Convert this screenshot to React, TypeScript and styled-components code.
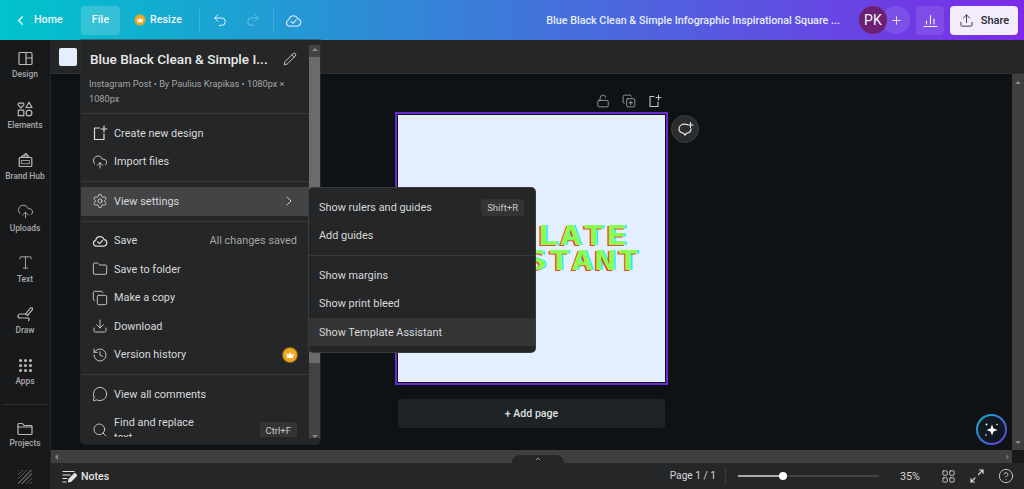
import React from 'react'
import styled, { createGlobalStyle } from 'styled-components'
import {
  ChevronLeft,
  ChevronRight,
  ChevronUp,
  CircleHelp,
  CloudUpload,
  Copy,
  CopyPlus,
  Download,
  Folder,
  Grip,
  History,
  LayoutGrid,
  LockOpen,
  MessageCircle,
  Pencil,
  Plus,
  Redo2,
  Search,
  Settings,
  Type,
  Undo2,
  Upload,
} from 'lucide-react'

const GlobalStyle = createGlobalStyle`
  html, body {
    margin: 0;
    height: 100%;
    background: #0e1215;
    overflow: hidden;
  }
  * { box-sizing: border-box; }
  #root {
    height: 100%;
    font-family: Roboto, "Noto Sans", sans-serif;
  }
`

const Shell = styled.div`
  position: relative;
  width: 1024px;
  height: 489px;
  display: flex;
  flex-direction: column;
  overflow: hidden;
`

/* top bar */
const TopBar = styled.header`
  height: 40px;
  flex: none;
  display: flex;
  align-items: center;
  padding: 0 6px 0 13px;
  color: #f4f7fc;
  background: linear-gradient(90deg, #00c4cc 0%, #7d2ae8 100%);
`
const TopLabel = styled.span`
  font-size: 10.6px;
  font-weight: 500;
  letter-spacing: 0.1px;
  line-height: 1;
`
const HomeLink = styled.div`
  display: flex;
  align-items: center;
  gap: 6px;
  width: 68px;
`
const FileButton = styled.div`
  width: 39px;
  height: 29px;
  border-radius: 4px;
  background: rgba(255, 255, 255, 0.17);
  display: flex;
  align-items: center;
  justify-content: center;
`
const ResizeButton = styled.div`
  display: flex;
  align-items: center;
  gap: 5px;
  margin-left: 15px;
`
const CrownDot = styled.span<{ $size: number }>`
  width: ${(p) => p.$size}px;
  height: ${(p) => p.$size}px;
  flex: none;
  border-radius: 50%;
  background: #f2a91d;
  box-shadow: 0 0 0 1px rgba(242, 169, 29, 0.45);
  display: flex;
  align-items: center;
  justify-content: center;
`
const TopDivider = styled.span<{ $left: number }>`
  width: 1px;
  height: 23px;
  margin-left: ${(p) => p.$left}px;
  background: rgba(255, 255, 255, 0.16);
`
const UndoGroup = styled.div`
  display: flex;
  align-items: center;
  gap: 17px;
  margin-left: 12px;
`
const SaveState = styled.span`
  display: flex;
  margin-left: 11px;
  opacity: 0.75;
`
const DocTitle = styled.div`
  margin-left: auto;
  font-size: 10.75px;
  font-weight: 500;
  white-space: nowrap;
  color: #e6edfb;
`
const People = styled.div`
  display: flex;
  align-items: center;
  margin-left: 19px;
`
const Avatar = styled.div`
  position: relative;
  z-index: 1;
  width: 28px;
  height: 28px;
  border-radius: 50%;
  background: #6b2071;
  font-size: 14px;
  letter-spacing: 0.3px;
  display: flex;
  align-items: center;
  justify-content: center;
`
const InviteButton = styled.div`
  width: 28px;
  height: 28px;
  margin-left: -5px;
  border-radius: 50%;
  background: rgba(255, 255, 255, 0.1);
  display: flex;
  align-items: center;
  justify-content: center;
`
const StatsButton = styled.div`
  width: 28px;
  height: 29px;
  margin-left: 6px;
  border-radius: 4px;
  background: rgba(255, 255, 255, 0.1);
  display: flex;
  align-items: center;
  justify-content: center;
`
const ShareButton = styled.div`
  width: 68px;
  height: 29px;
  margin-left: 6px;
  border-radius: 4px;
  background: #f2ecfc;
  color: #26282c;
  font-size: 11px;
  font-weight: 500;
  display: flex;
  align-items: center;
  justify-content: center;
  gap: 7px;
`

/* body */
const Body = styled.div`
  flex: 1;
  min-height: 0;
  display: flex;
`
const Rail = styled.nav`
  width: 51px;
  flex: none;
  background: #18191b;
  border-right: 1px solid #242527;
  display: flex;
  flex-direction: column;
  align-items: center;
`
const RailItem = styled.div`
  width: 100%;
  height: 51.2px;
  flex: none;
  display: flex;
  flex-direction: column;
  align-items: center;
  gap: 2px;
  padding-top: 9px;
  color: #b9babb;
`
const RailIcon = styled.span<{ $h?: number }>`
  height: ${(p) => p.$h ?? 18}px;
  display: flex;
  align-items: center;
  justify-content: center;
  margin-bottom: ${(p) => (p.$h ? -1 : 0)}px;
`
const RailLabel = styled.span`
  font-size: 8.4px;
  line-height: 10px;
  font-weight: 500;
  color: #a9aaab;
  white-space: nowrap;
`
const RailRule = styled.div`
  width: 45px;
  height: 1px;
  flex: none;
  margin: 5.6px 0 8px;
  background: #2b2c2e;
`
const Hatch = styled.div`
  width: 14px;
  height: 14px;
  margin-top: 6px;
  flex: none;
  background: repeating-linear-gradient(135deg, #58595b 0 1px, transparent 1px 3px);
`
const Workspace = styled.main`
  flex: 1;
  min-width: 0;
  display: flex;
  flex-direction: column;
`
const ContextBar = styled.div`
  height: 34px;
  flex: none;
  background: #252627;
  border-bottom: 1px solid #2f3032;
  display: flex;
  align-items: center;
  padding-left: 8px;
`
const Swatch = styled.div`
  width: 18px;
  height: 18px;
  border-radius: 2px;
  background: #e3eefe;
`
const CanvasRow = styled.div`
  flex: 1;
  min-height: 0;
  display: flex;
`
const Canvas = styled.div`
  position: relative;
  flex: 1;
  min-width: 0;
  background: #0e1215;
  display: flex;
  flex-direction: column;
  align-items: center;
  padding-top: 17px;
`
const PageTools = styled.div`
  width: 273px;
  height: 21px;
  display: flex;
  justify-content: flex-end;
  align-items: center;
  gap: 12px;
  padding: 0 6px 1px 0;
  color: #c4c6c7;
`
const Page = styled.div`
  width: 273px;
  height: 273px;
  flex: none;
  border: 2px solid #6a2bd0;
  outline: 1px solid #111;
  outline-offset: -3px;
  background: #e3eefe;
  display: flex;
  align-items: center;
  justify-content: center;
`
const PageText = styled.div`
  font-family: "DejaVu Sans Mono", monospace;
  font-size: 26px;
  font-weight: 700;
  line-height: 24.5px;
  text-align: center;
  white-space: nowrap;
  color: #86ff4e;
  letter-spacing: 1px;
  text-shadow: -1px 0.5px 0 #e8452f, 1px -0.5px 0 #22e6f2;
  transform: translateX(5px) scaleX(1.38);
`
const AddPage = styled.div`
  width: 267px;
  height: 29px;
  margin-top: 14px;
  border-radius: 3px;
  background: #1e2326;
  color: #dfe1e2;
  font-size: 10.6px;
  font-weight: 500;
  display: flex;
  align-items: center;
  justify-content: center;
`
const CommentBubble = styled.div`
  position: absolute;
  left: 620px;
  top: 41px;
  width: 28px;
  height: 28px;
  border-radius: 50%;
  background: #2a2c2e;
  border: 1px solid #3b3d3f;
  color: #e4e5e6;
  display: flex;
  align-items: center;
  justify-content: center;
`
const MagicButton = styled.div`
  position: absolute;
  right: 5px;
  bottom: 5px;
  width: 31px;
  height: 31px;
  border-radius: 50%;
  padding: 2px;
  background: linear-gradient(135deg, #10b8cf, #6a35d8);
  &::before {
    content: '';
    display: block;
    width: 100%;
    height: 100%;
    border-radius: 50%;
    background: #111a22;
  }
  svg {
    position: absolute;
    left: 7px;
    top: 7px;
  }
`

/* scroll bars */
const VScroll = styled.div`
  width: 12px;
  flex: none;
  background: #3f3f3f;
  display: flex;
  flex-direction: column;
  align-items: center;
  justify-content: space-between;
  padding: 7px 0 6px;
`
const Arrow = styled.span<{ $dir: 'up' | 'down' | 'left' | 'right' }>`
  width: 0;
  height: 0;
  flex: none;
  border-style: solid;
  border-color: transparent;
  border-width: 3px;
  ${(p) => (p.$dir === 'up' ? 'border-top-width: 0; border-bottom-color: #8a8a8a;' : '')}
  ${(p) => (p.$dir === 'down' ? 'border-bottom-width: 0; border-top-color: #8a8a8a;' : '')}
  ${(p) => (p.$dir === 'left' ? 'border-left-width: 0; border-right-color: #8a8a8a;' : '')}
  ${(p) => (p.$dir === 'right' ? 'border-right-width: 0; border-left-color: #6a6a6a;' : '')}
`
const HScrollRow = styled.div`
  height: 13px;
  flex: none;
  display: flex;
`
const HScroll = styled.div`
  position: relative;
  flex: 1;
  background: #3f3f3f;
  display: flex;
  align-items: center;
  justify-content: space-between;
  padding: 0 3px 0 4px;
`
const Corner = styled.div`
  width: 12px;
  background: #18191b;
`
const PanelNotch = styled.div`
  position: absolute;
  left: 461px;
  bottom: 0;
  width: 52px;
  height: 8px;
  border-radius: 9px 9px 0 0;
  background: #252627;
  color: #c9cacb;
  display: flex;
  align-items: center;
  justify-content: center;
`

/* footer */
const Footer = styled.footer`
  height: 26px;
  flex: none;
  background: #252627;
  color: #d5d6d7;
  display: flex;
  align-items: center;
  padding: 0 10px 0 11px;
`
const NotesButton = styled.div`
  display: flex;
  align-items: center;
  gap: 4px;
  font-size: 10.6px;
  font-weight: 500;
  color: #e2e3e3;
`
const PageCount = styled.div`
  margin-left: auto;
  font-size: 10.2px;
  padding-right: 9px;
  border-right: 1px solid #3a3b3c;
  line-height: 16px;
`
const Slider = styled.div`
  position: relative;
  width: 141px;
  height: 2px;
  margin-left: 12px;
  background: #414243;
`
const SliderFill = styled.div`
  height: 100%;
  background: #a9aaab;
`
const SliderThumb = styled.span`
  position: absolute;
  top: -3px;
  width: 8px;
  height: 8px;
  margin-left: -4px;
  border-radius: 50%;
  background: #fff;
`
const ZoomValue = styled.div`
  width: 22px;
  margin-left: 19px;
  font-size: 10.8px;
  text-align: right;
`
const FooterIcons = styled.div`
  display: flex;
  align-items: center;
  gap: 13px;
  margin-left: 21px;
`

/* file menu */
const Menu = styled.div`
  position: absolute;
  left: 81px;
  top: 40px;
  width: 239px;
  height: 404px;
  display: flex;
  background: #252627;
  border-radius: 0 0 4px 4px;
  box-shadow: 0 0 0 1px #34353680;
  color: #d8d9da;
  z-index: 2;
`
const MenuBody = styled.div`
  flex: 1;
  min-width: 0;
  margin-bottom: 7px;
  overflow: hidden;
`
const MenuTitle = styled.div`
  height: 36px;
  margin-top: 1px;
  padding: 0 12px 0 9px;
  display: flex;
  align-items: center;
  justify-content: space-between;
  color: #e8e9e9;
  font-size: 13.6px;
  font-weight: 500;
  white-space: nowrap;
`
const MenuMeta = styled.div`
  padding: 0 8px;
  margin-top: -1px;
  font-size: 9.2px;
  line-height: 15px;
  color: #a4a5a6;
`
const MenuRule = styled.div<{ $top?: number }>`
  height: 1px;
  margin: ${(p) => p.$top ?? 5}px 0 5px;
  background: #38393a;
`
const Row = styled.div<{ $active?: boolean }>`
  display: flex;
  align-items: center;
  min-height: 28.5px;
  padding: 6.75px 12px 6.75px 11px;
  background: ${(p) => (p.$active ? '#434445' : 'transparent')};
  font-size: 10.9px;
  line-height: 15px;
  color: #d8d9da;
`
const RowIcon = styled.span`
  width: 22px;
  height: 15px;
  flex: none;
  display: flex;
  align-items: center;
`
const RowEnd = styled.span`
  height: 15px;
  flex: none;
  display: flex;
  align-items: center;
`
const RowLabel = styled.span`
  flex: 1;
  min-width: 0;
`
const WrapLabel = styled.span`
  width: 100px;
  flex: none;
`
const RowNote = styled.span`
  margin-left: auto;
  color: #a4a5a6;
  white-space: nowrap;
`
const Kbd = styled.span`
  margin: -1px 0 -1px auto;
  padding: 0 6px;
  height: 17px;
  border-radius: 3px;
  background: #333435;
  color: #c8c9ca;
  font-size: 9.5px;
  display: flex;
  align-items: center;
`
const MenuScroll = styled.div`
  width: 11px;
  flex: none;
  margin: 5px 0 6px;
  background: #434343;
  display: flex;
  flex-direction: column;
  align-items: center;
  padding-top: 3px;
`
const MenuThumb = styled.div`
  width: 100%;
  height: 306px;
  margin-top: 6px;
  background: #6b6b6b;
`
const ThumbSpacer = styled.div`
  flex: 1;
`
const SubMenu = styled.div`
  position: absolute;
  left: 309px;
  top: 188px;
  width: 226px;
  height: 164px;
  padding: 4.75px 0;
  background: #252627;
  border-radius: 4px;
  box-shadow: 0 0 0 1px #3a3b3c;
  z-index: 3;
`
const SubRow = styled(Row)`
  padding-left: 10px;
  padding-right: 11px;
`
const SubHover = styled(SubRow)`
  background: #333435;
`

const Crown = ({ size }: { size: number }) => (
  <svg width={size} height={size} viewBox="0 0 12 12" fill="#fff">
    <path d="M1.5 3.5 4 6l2-3.5L8 6l2.5-2.5L9.5 9.5h-7z" />
  </svg>
)

const line = {
  fill: 'none',
  stroke: 'currentColor',
  strokeWidth: 1.2,
  strokeLinecap: 'round' as const,
  strokeLinejoin: 'round' as const,
}

const DesignIcon = () => (
  <svg width="15" height="15" viewBox="0 0 15 15" {...line}>
    <rect x="1" y="1.5" width="13" height="12" rx="1" />
    <path d="M8 1.5v12M8 7h6" />
  </svg>
)
const ElementsIcon = () => (
  <svg width="16" height="16" viewBox="0 0 16 16" {...line}>
    <path d="M4 7 1.4 4.200a1.500 1.500 0 0 1 2.200-2L4 2.600l.4-.4a1.500 1.500 0 0 1 2.200 2z" />
    <path d="M12 1.200 15 6.500H9z" />
    <rect x="1.300" y="9.200" width="5.500" height="5.500" />
    <circle cx="12" cy="12" r="2.900" />
  </svg>
)
const BrandIcon = () => (
  <svg width="15" height="16" viewBox="0 0 15 16" {...line}>
    <rect x="1.200" y="5.500" width="12.600" height="9" rx="1" />
    <path d="m3 5.300 5-3.800 3 3.600M5 3.800l5 .2" />
    <rect x="3.600" y="8.500" width="7.800" height="3.200" strokeWidth="0.8" />
  </svg>
)
const DrawIcon = () => (
  <svg width="16" height="16" viewBox="0 0 16 16" {...line}>
    <path d="m8.600 8 4.800-6a1.300 1.300 0 0 1 2 1.600L10.600 9.400z" />
    <path d="M8.600 8H3a2 2 0 0 0 0 4h7a1.500 1.500 0 0 1 1.600 2.500" />
  </svg>
)
const FolderWide = () => (
  <svg width="16" height="14" viewBox="0 0 16 14" {...line}>
    <path d="M1 2.600C1 2 1.400 1.500 2 1.500h3.400l1.600 2h7c.6 0 1 .5 1 1v7c0 .6-.4 1-1 1H2c-.6 0-1-.4-1-1z" />
    <path d="M1 5h14" />
  </svg>
)
const CreateIcon = () => (
  <svg width="16" height="16" viewBox="0 0 16 16" {...line}>
    <path d="M7.500 3H2.500v11.500H12V9" />
    <path d="M12 1v6M9 4h6" />
  </svg>
)
const CloudCheck = ({ size }: { size: number }) => (
  <svg width={size} height={size} viewBox="0 0 16 16" {...line}>
    <path d="M4.200 13.200a3 3 0 0 1-.5-5.900 4.300 4.300 0 0 1 8.200-1 3.500 3.500 0 0 1 0 6.900z" />
    <path d="m5.800 9 1.700 1.700 3-3.200" />
  </svg>
)
const StatsIcon = () => (
  <svg width="15" height="15" viewBox="0 0 15 15" {...line} strokeWidth={1.1}>
    <path d="M1 13.500h13M3.500 11V8M7.500 11V2.500M11 11V6" />
  </svg>
)
const NotesIcon = () => (
  <svg width="15" height="14" viewBox="0 0 15 14" {...line}>
    <path d="M1 2.500h11M1 6h7M1 9.500h4M1 13h3" />
    <path d="m6.500 12.800.6-2.600 5.600-5.800 2 2-5.600 5.800z" fill="currentColor" />
  </svg>
)
const ExpandIcon = () => (
  <svg width="16" height="16" viewBox="0 0 16 16" {...line}>
    <path d="M9.500 6.500 14 2M10.500 2H14v3.500M6 10l-4 4M2 10.500V14h3.500" />
  </svg>
)
const AddPageIcon = () => (
  <svg width="14" height="14" viewBox="0 0 14 14" {...line} strokeWidth={1.1}>
    <path d="M6 2.500H2v10h8V8" />
    <path d="M10.500 1v5M8 3.500h5" />
  </svg>
)
const CommentPlus = () => (
  <svg width="17" height="17" viewBox="0 0 17 17" {...line}>
    <path d="M10.500 3.600C9.700 3.300 8.800 3.200 8 3.200c-3.400 0-6 1.900-6 4.600 0 2.300 2 4.100 4.700 4.500l1.300 1.900 1.300-1.900c2.700-.4 4.700-2.200 4.700-4.500" />
    <path d="M13.500 1.500v5M11 4h5" />
  </svg>
)
const Sparkle = () => (
  <svg width="17" height="17" viewBox="0 0 17 17" fill="#fff">
    <path d="M9 3.500 10.500 7.500 14.500 9 10.500 10.500 9 14.500 7.500 10.500 3.500 9 7.500 7.500z" />
    <circle cx="3.500" cy="3.500" r="0.9" />
    <circle cx="14" cy="3.500" r="0.8" />
    <circle cx="3" cy="14" r="0.8" />
  </svg>
)

const railItems: { label: string; icon: React.ReactNode }[] = [
  { label: 'Design', icon: <DesignIcon /> },
  { label: 'Elements', icon: <ElementsIcon /> },
  { label: 'Brand Hub', icon: <BrandIcon /> },
  { label: 'Uploads', icon: <CloudUpload size={17} strokeWidth={1.2} /> },
  { label: 'Text', icon: <Type size={17} strokeWidth={1.2} /> },
  { label: 'Draw', icon: <DrawIcon /> },
  { label: 'Apps', icon: <Grip size={17} strokeWidth={2.4} /> },
]

const ic = { size: 16, strokeWidth: 1.3 }

const App: React.FC = () => (
  <Shell>
    <GlobalStyle />
    <TopBar>
      <HomeLink>
        <ChevronLeft size={15} strokeWidth={2} />
        <TopLabel>Home</TopLabel>
      </HomeLink>
      <FileButton>
        <TopLabel>File</TopLabel>
      </FileButton>
      <ResizeButton>
        <CrownDot $size={10}>
          <Crown size={8} />
        </CrownDot>
        <TopLabel>Resize</TopLabel>
      </ResizeButton>
      <TopDivider $left={17} />
      <UndoGroup>
        <Undo2 size={16} strokeWidth={1.4} />
        <Redo2 size={16} strokeWidth={1.4} opacity={0.4} />
      </UndoGroup>
      <TopDivider $left={12} />
      <SaveState>
        <CloudCheck size={17} />
      </SaveState>
      <DocTitle>Blue Black Clean &amp; Simple Infographic Inspirational Square ...</DocTitle>
      <People>
        <Avatar>PK</Avatar>
        <InviteButton>
          <Plus size={13} strokeWidth={1.6} />
        </InviteButton>
      </People>
      <StatsButton>
        <StatsIcon />
      </StatsButton>
      <ShareButton>
        <Upload size={15} strokeWidth={1.4} />
        Share
      </ShareButton>
    </TopBar>

    <Body>
      <Rail>
        {railItems.map((item) => (
          <RailItem key={item.label}>
            <RailIcon>{item.icon}</RailIcon>
            <RailLabel>{item.label}</RailLabel>
          </RailItem>
        ))}
        <RailRule />
        <RailItem>
          <RailIcon $h={15}>
            <FolderWide />
          </RailIcon>
          <RailLabel>Projects</RailLabel>
        </RailItem>
        <Hatch />
      </Rail>

      <Workspace>
        <ContextBar>
          <Swatch />
        </ContextBar>
        <CanvasRow>
          <Canvas>
            <PageTools>
              <LockOpen size={14} strokeWidth={1.2} />
              <CopyPlus size={14} strokeWidth={1.2} />
              <AddPageIcon />
            </PageTools>
            <Page>
              <PageText>
                TEMPLATE
                <br />
                ASSISTANT
              </PageText>
            </Page>
            <AddPage>+ Add page</AddPage>
            <CommentBubble>
              <CommentPlus />
            </CommentBubble>
            <MagicButton>
              <Sparkle />
            </MagicButton>
          </Canvas>
          <VScroll>
            <Arrow $dir="up" />
            <Arrow $dir="down" />
          </VScroll>
        </CanvasRow>
        <HScrollRow>
          <HScroll>
            <Arrow $dir="left" />
            <PanelNotch>
              <ChevronUp size={8} strokeWidth={2} />
            </PanelNotch>
            <Arrow $dir="right" />
          </HScroll>
          <Corner />
        </HScrollRow>
        <Footer>
          <NotesButton>
            <NotesIcon />
            Notes
          </NotesButton>
          <PageCount>Page 1 / 1</PageCount>
          <Slider>
            <SliderFill style={{ width: '32%' }} />
            <SliderThumb style={{ left: '32%' }} />
          </Slider>
          <ZoomValue>35%</ZoomValue>
          <FooterIcons>
            <LayoutGrid size={15} strokeWidth={1.4} />
            <ExpandIcon />
            <CircleHelp size={16} strokeWidth={1.3} />
          </FooterIcons>
        </Footer>
      </Workspace>
    </Body>

    <Menu>
      <MenuBody>
        <MenuTitle>
          Blue Black Clean &amp; Simple I...
          <Pencil size={14} strokeWidth={1.4} />
        </MenuTitle>
        <MenuMeta>Instagram Post • By Paulius Krapikas • 1080px × 1080px</MenuMeta>
        <MenuRule $top={7} />
        <Row>
          <RowIcon><CreateIcon /></RowIcon>
          <RowLabel>Create new design</RowLabel>
        </Row>
        <Row>
          <RowIcon><CloudUpload {...ic} /></RowIcon>
          <RowLabel>Import files</RowLabel>
        </Row>
        <MenuRule />
        <Row $active>
          <RowIcon><Settings {...ic} /></RowIcon>
          <RowLabel>View settings</RowLabel>
          <RowEnd><ChevronRight size={16} strokeWidth={1.4} /></RowEnd>
        </Row>
        <MenuRule />
        <Row>
          <RowIcon><CloudCheck size={16} /></RowIcon>
          <RowLabel>Save</RowLabel>
          <RowNote>All changes saved</RowNote>
        </Row>
        <Row>
          <RowIcon><Folder {...ic} /></RowIcon>
          <RowLabel>Save to folder</RowLabel>
        </Row>
        <Row>
          <RowIcon><Copy {...ic} /></RowIcon>
          <RowLabel>Make a copy</RowLabel>
        </Row>
        <Row>
          <RowIcon><Download {...ic} /></RowIcon>
          <RowLabel>Download</RowLabel>
        </Row>
        <Row>
          <RowIcon><History {...ic} /></RowIcon>
          <RowLabel>Version history</RowLabel>
          <RowEnd>
            <CrownDot $size={14}>
              <Crown size={10} />
            </CrownDot>
          </RowEnd>
        </Row>
        <MenuRule />
        <Row>
          <RowIcon><MessageCircle {...ic} /></RowIcon>
          <RowLabel>View all comments</RowLabel>
        </Row>
        <Row>
          <RowIcon><Search {...ic} /></RowIcon>
          <WrapLabel>Find and replace text</WrapLabel>
          <Kbd>Ctrl+F</Kbd>
        </Row>
      </MenuBody>
      <MenuScroll>
        <Arrow $dir="up" />
        <MenuThumb />
        <ThumbSpacer />
        <Arrow $dir="down" />
      </MenuScroll>
    </Menu>

    <SubMenu>
      <SubRow>
        <RowLabel>Show rulers and guides</RowLabel>
        <Kbd>Shift+R</Kbd>
      </SubRow>
      <SubRow>
        <RowLabel>Add guides</RowLabel>
      </SubRow>
      <MenuRule />
      <SubRow>
        <RowLabel>Show margins</RowLabel>
      </SubRow>
      <SubRow>
        <RowLabel>Show print bleed</RowLabel>
      </SubRow>
      <SubHover>
        <RowLabel>Show Template Assistant</RowLabel>
      </SubHover>
    </SubMenu>
  </Shell>
)

export default App
